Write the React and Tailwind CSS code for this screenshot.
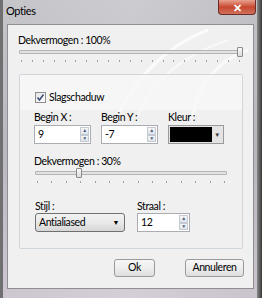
import React from 'react';

const font = { fontFamily: 'Lato, "Open Sans", sans-serif' };

const Ticks = ({ count, className }) => (
  <div className={`flex justify-between ${className}`}>
    {Array.from({ length: count }).map((_, i) => (
      <span key={i} className="w-px h-[2px] bg-[#a0a0a0]" />
    ))}
  </div>
);

const Slider = ({ thumbLeft, className, tickCount }) => (
  <div className={className}>
    <div className="relative h-[10px]">
      <div className="absolute left-0 right-0 top-[3px] h-[4px] border border-[#b4b4b4] bg-[#e2e2e2] rounded-[1px]" />
      <div
        className="absolute top-0 w-[6px] h-[10px] border border-[#8a8a8a] bg-gradient-to-b from-[#fafafa] to-[#dcdcdc] rounded-[1px]"
        style={{ left: thumbLeft }}
      />
    </div>
    <Ticks count={tickCount} className="mt-[3px] px-[2px]" />
  </div>
);

const Spin = ({ value, className }) => (
  <div className={`flex h-[19px] border border-[#abadb3] bg-white ${className}`}>
    <span className="flex-1 pl-[3px] leading-[17px] text-black">{value}</span>
    <div className="flex flex-col w-[9px] m-[1px]">
      <div className="flex-1 flex items-center justify-center border border-[#c5cbd3] bg-gradient-to-b from-[#f6f6f6] to-[#dfe3e8] text-[5px] text-[#4d6185] leading-none">▲</div>
      <div className="flex-1 flex items-center justify-center border border-[#c5cbd3] bg-gradient-to-b from-[#f6f6f6] to-[#dfe3e8] text-[5px] text-[#4d6185] leading-none">▼</div>
    </div>
  </div>
);

const Label = ({ children, className }) => (
  <div className={`leading-[13px] text-black ${className}`}>{children}</div>
);

const Button = ({ children, className }) => (
  <div
    className={`h-[18px] flex items-center justify-center text-black border border-[#9a9a9a] rounded-[3px] bg-gradient-to-b from-[#f6f6f6] via-[#eeeeee] to-[#dedede] ${className}`}
  >
    {children}
  </div>
);

export default function App() {
  return (
    <div
      className="relative w-[262px] h-[298px] overflow-hidden text-[10.5px] tracking-[-0.4px] bg-gradient-to-r from-[#6a6a70] via-[#b7b3bb] to-[#4a4a50]"
      style={font}
    >
      {/* glass frame */}
      <div className="absolute inset-0 bg-gradient-to-b from-[#cfcfd3] via-[#c4c0c8] to-[#d9d1dc] opacity-90" />
      <div className="absolute left-0 top-0 bottom-0 w-[3px] bg-[#707070]" />
      <div className="absolute right-0 top-0 bottom-0 w-[5px] bg-gradient-to-r from-[#8a8a8a] to-[#3a3a3a]" />

      {/* close button */}
      <div className="absolute top-0 right-[6px] w-[38px] h-[15px] rounded-b-[4px] border border-[#6b2b2b] border-t-0 bg-gradient-to-b from-[#e8a08e] via-[#c7472f] to-[#d0705a] flex items-center justify-center text-white text-[11px] font-bold leading-none">
        ✕
      </div>

      <div className="relative flex flex-col h-full">
        <div className="h-[24px] pl-[6px] pt-[3px] text-[11px] leading-[16px] text-black">Opties</div>

        <div className="relative ml-[7px] mr-[8px] h-[265px] border border-[#8f8f93] bg-[#f0f0f0] flex flex-col">
          {/* faint watermark */}
          <svg className="absolute left-[90px] top-0 pointer-events-none" width="160" height="90" viewBox="0 0 160 90">
            <path d="M20 90 C40 50 70 20 110 5" stroke="#ffffff" strokeWidth="3" fill="none" opacity="0.7" />
            <path d="M40 90 C55 55 85 30 130 15" stroke="#ffffff" strokeWidth="2" fill="none" opacity="0.6" />
            <path d="M95 90 C100 60 120 35 150 25" stroke="#ffffff" strokeWidth="3" fill="none" opacity="0.6" />
          </svg>

          <Label className="relative ml-[10px] mt-[9px]">Dekvermogen : 100%</Label>
          <Slider thumbLeft="218px" tickCount={21} className="relative ml-[11px] mr-[11px]" />

          {/* group box */}
          <div className="relative ml-[11px] mr-[10px] mt-[12px] h-[175px] border border-[#cfd6dc] rounded-[2px] flex flex-col">
            <div className="h-[35px] bg-[#f7f7f7]/80 flex items-end pb-[6px] pl-[15px]">
              <div className="flex items-center gap-[3px]">
                <div className="w-[11px] h-[11px] border border-[#8f8f8f] bg-gradient-to-br from-[#e6e6e6] to-[#ffffff] flex items-center justify-center">
                  <svg width="9" height="9" viewBox="0 0 9 9">
                    <path d="M1.5 4.5 L3.5 7 L7.5 1.5" stroke="#3a4f7a" strokeWidth="1.6" fill="none" />
                  </svg>
                </div>
                <span className="leading-[14px] text-black">Slagschaduw</span>
              </div>
            </div>

            <div className="flex gap-[10px] pl-[14px] mt-[1px]">
              <div className="w-[57px]">
                <Label>Begin X :</Label>
                <Spin value="9" className="mt-[1px]" />
              </div>
              <div className="w-[57px]">
                <Label>Begin Y :</Label>
                <Spin value="-7" className="mt-[1px]" />
              </div>
              <div className="w-[56px]">
                <Label>Kleur :</Label>
                <div className="mt-[1px] h-[19px] border border-[#9a9a9a] bg-[#e4e4e4] flex p-[1px]">
                  <div className="flex-1 bg-black" />
                  <div className="w-[10px] flex items-center justify-center text-[6px] text-[#333]">▼</div>
                </div>
              </div>
            </div>

            <Label className="ml-[14px] mt-[11px]">Dekvermogen : 30%</Label>
            <Slider thumbLeft="41px" tickCount={14} className="ml-[15px] mr-[15px]" />

            <div className="flex gap-[12px] pl-[15px] mt-[17px]">
              <div className="w-[90px]">
                <Label>Stijl :</Label>
                <div className="h-[19px] border border-[#707070] rounded-[3px] bg-gradient-to-b from-[#f2f2f2] via-[#e9e9e9] to-[#d6d6d6] flex items-center pl-[3px] pr-[5px]">
                  <span className="flex-1 text-black">Antialiased</span>
                  <span className="text-[7px] text-black">▼</span>
                </div>
              </div>
              <div className="w-[53px]">
                <Label>Straal :</Label>
                <Spin value="12" />
              </div>
            </div>
          </div>

          <div className="flex justify-end gap-[30px] mr-[9px] mt-[10px]">
            <Button className="w-[41px]">Ok</Button>
            <Button className="w-[59px]">Annuleren</Button>
          </div>
        </div>
      </div>
    </div>
  );
}
